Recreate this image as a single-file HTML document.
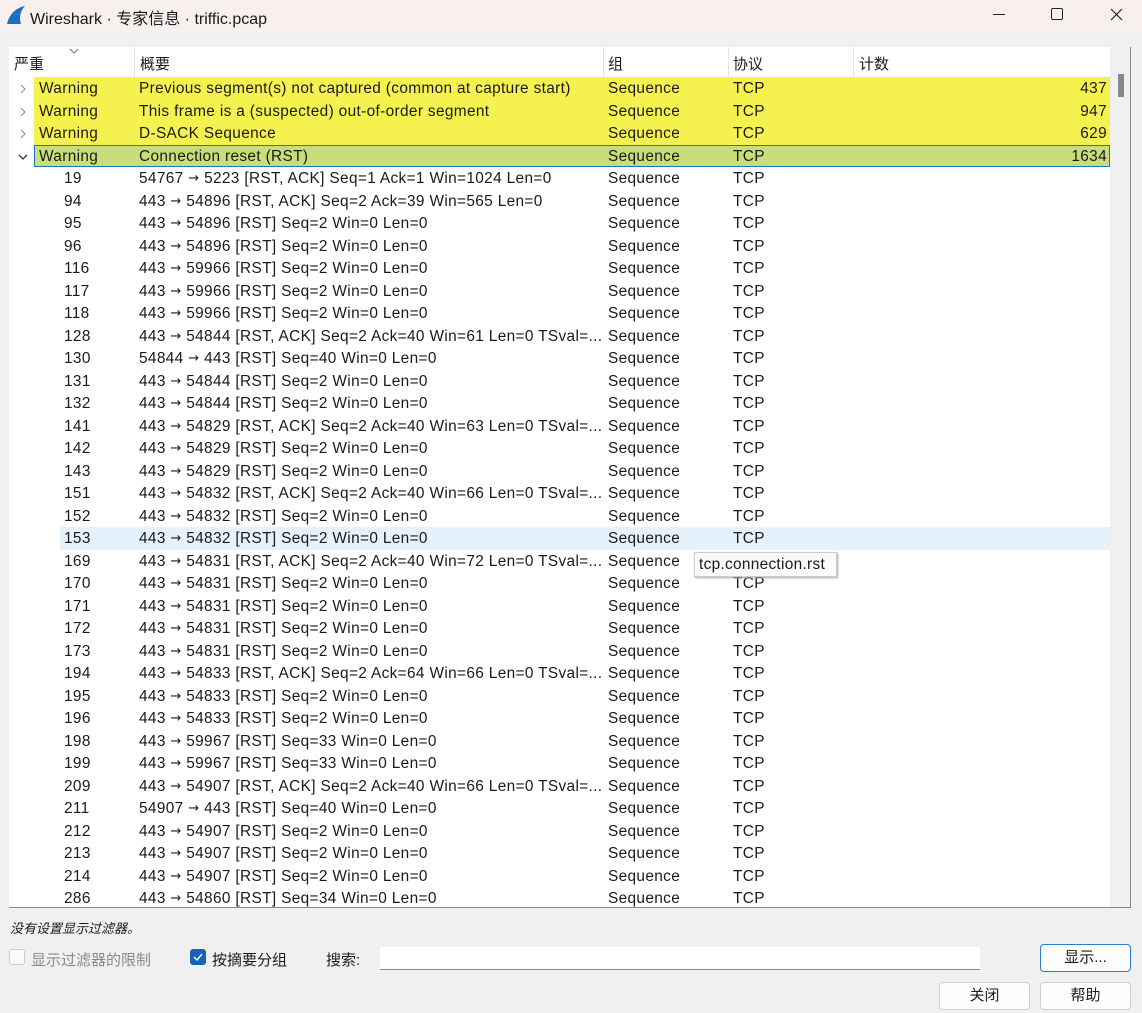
<!DOCTYPE html>
<html><head><meta charset="utf-8"><style>
*{margin:0;padding:0;box-sizing:border-box}
body{width:1142px;height:1013px;background:#f0f0f0;font-family:"Liberation Sans","Noto Sans CJK SC",sans-serif;font-size:15px;color:#1a1a1a;position:relative;overflow:hidden}
.title{position:absolute;left:0;top:0;width:1142px;height:32px;background:#f8f0ef}
.title span{position:absolute;left:30px;top:5px;font-size:16px}
.a{position:absolute}
.tbl{position:absolute;left:9px;top:47px;width:1122px;height:861px;background:#fff;border-right:1px solid #888;border-bottom:1px solid #888;overflow:hidden}
.hdr{position:absolute;top:0;left:0;height:31px;width:1101px}
.hdr div{position:absolute;top:6px}
.sep{position:absolute;top:0;height:31px;width:1px;background:#e5e5e5}
.row{position:absolute;left:0;width:1101px;height:22.5px;line-height:23px;white-space:nowrap;font-size:15.4px;letter-spacing:0.35px}
.row div{position:absolute;top:0}
.ar{font-family:"DejaVu Sans",sans-serif;font-size:13px;position:relative;top:-1px}
.y{background:#f5f250}
.g{background:#c8de78;border:1px solid #1a73c8;}
.sb{position:absolute;left:1101px;top:0;width:20px;height:861px;background:#f0f0f0}
.btn{position:absolute;background:#fdfdfd;border:1px solid #d0d0d0;border-radius:4px;text-align:center;line-height:26px;font-size:15px}
</style></head><body>
<div class="title"><svg class="a" style="left:6px;top:5px" width="20" height="20" viewBox="0 0 20 20"><path d="M1 19 C3 10 9 3 19 1 C14 6 13 13 15 19 Z" fill="#1a6fc0"/></svg><span>Wireshark · 专家信息 · triffic.pcap</span>
<div class="a" style="left:993px;top:14px;width:12px;height:1px;background:#222"></div>
<div class="a" style="left:1051px;top:8px;width:12px;height:12px;border:1px solid #222;border-radius:2px"></div>
<svg class="a" style="left:1110px;top:8px" width="13" height="13"><path d="M1 1L12 12M12 1L1 12" stroke="#222" stroke-width="1.2"/></svg>
</div>
<div class="tbl">
<div class="hdr"><div style="left:5px">严重</div><div style="left:131px">概要</div><div style="left:599px">组</div><div style="left:724px">协议</div><div style="left:850px">计数</div>
<svg class="a" style="left:60px;top:1px" width="10" height="6"><path d="M1 1L5 5L9 1" stroke="#777" fill="none"/></svg></div>
<div class="sep" style="left:125px"></div><div class="sep" style="left:594px"></div><div class="sep" style="left:719px"></div><div class="sep" style="left:844px"></div>
<div id="rows"></div>
<div class="sb"><div class="a" style="left:8px;top:27px;width:6px;height:23px;background:#888"></div></div>
</div>
<div class="a" style="left:694px;top:552px;width:143px;height:25px;background:#fafafa;border:1px solid #ccc;box-shadow:1px 1px 2px #aaa;line-height:23px;padding-left:4px;font-size:15.4px;letter-spacing:0.3px">tcp.connection.rst</div>
<div class="a" style="left:10px;top:918px;font-style:italic;font-size:13px">没有设置显示过滤器。</div>
<div class="a" style="left:9px;top:949px;width:16px;height:16px;border:1px solid #ccc;border-radius:3px;background:#fafafa"></div>
<div class="a" style="left:31px;top:949px;color:#8a8a8a">显示过滤器的限制</div>
<div class="a" style="left:190px;top:949px;width:16px;height:16px;border-radius:3px;background:#1a62b8"><svg width="16" height="16"><path d="M4 8L7 11L12 5" stroke="#fff" stroke-width="1.4" fill="none"/></svg></div>
<div class="a" style="left:212px;top:949px">按摘要分组</div>
<div class="a" style="left:326px;top:949px">搜索:</div>
<div class="a" style="left:380px;top:947px;width:600px;height:23px;background:#fff;border-bottom:1px solid #888"></div>
<div class="btn" style="left:1040px;top:944px;width:91px;height:28px;border:1px solid #2a7ad0">显示...</div>
<div class="btn" style="left:939px;top:982px;width:91px;height:28px">关闭</div>
<div class="btn" style="left:1040px;top:982px;width:91px;height:28px">帮助</div>
<script>
var g=[["Previous segment(s) not captured (common at capture start)","437"],["This frame is a (suspected) out-of-order segment","947"],["D-SACK Sequence","629"],["Connection reset (RST)","1634"]];
var c=[["19","54767 → 5223 [RST, ACK] Seq=1 Ack=1 Win=1024 Len=0"],["94","443 → 54896 [RST, ACK] Seq=2 Ack=39 Win=565 Len=0"],["95","443 → 54896 [RST] Seq=2 Win=0 Len=0"],["96","443 → 54896 [RST] Seq=2 Win=0 Len=0"],["116","443 → 59966 [RST] Seq=2 Win=0 Len=0"],["117","443 → 59966 [RST] Seq=2 Win=0 Len=0"],["118","443 → 59966 [RST] Seq=2 Win=0 Len=0"],["128","443 → 54844 [RST, ACK] Seq=2 Ack=40 Win=61 Len=0 TSval=..."],["130","54844 → 443 [RST] Seq=40 Win=0 Len=0"],["131","443 → 54844 [RST] Seq=2 Win=0 Len=0"],["132","443 → 54844 [RST] Seq=2 Win=0 Len=0"],["141","443 → 54829 [RST, ACK] Seq=2 Ack=40 Win=63 Len=0 TSval=..."],["142","443 → 54829 [RST] Seq=2 Win=0 Len=0"],["143","443 → 54829 [RST] Seq=2 Win=0 Len=0"],["151","443 → 54832 [RST, ACK] Seq=2 Ack=40 Win=66 Len=0 TSval=..."],["152","443 → 54832 [RST] Seq=2 Win=0 Len=0"],["153","443 → 54832 [RST] Seq=2 Win=0 Len=0"],["169","443 → 54831 [RST, ACK] Seq=2 Ack=40 Win=72 Len=0 TSval=..."],["170","443 → 54831 [RST] Seq=2 Win=0 Len=0"],["171","443 → 54831 [RST] Seq=2 Win=0 Len=0"],["172","443 → 54831 [RST] Seq=2 Win=0 Len=0"],["173","443 → 54831 [RST] Seq=2 Win=0 Len=0"],["194","443 → 54833 [RST, ACK] Seq=2 Ack=64 Win=66 Len=0 TSval=..."],["195","443 → 54833 [RST] Seq=2 Win=0 Len=0"],["196","443 → 54833 [RST] Seq=2 Win=0 Len=0"],["198","443 → 59967 [RST] Seq=33 Win=0 Len=0"],["199","443 → 59967 [RST] Seq=33 Win=0 Len=0"],["209","443 → 54907 [RST, ACK] Seq=2 Ack=40 Win=66 Len=0 TSval=..."],["211","54907 → 443 [RST] Seq=40 Win=0 Len=0"],["212","443 → 54907 [RST] Seq=2 Win=0 Len=0"],["213","443 → 54907 [RST] Seq=2 Win=0 Len=0"],["214","443 → 54907 [RST] Seq=2 Win=0 Len=0"],["286","443 → 54860 [RST] Seq=34 Win=0 Len=0"]];
var h="",y=30;
g.forEach(function(r,i){var last=i==3;
h+='<div class="row '+(last?'g':'y')+'" style="top:'+y+'px;left:25px;width:1076px;'+(last?'line-height:21px':'')+'"><div style="left:'+(last?4:5)+'px">Warning</div><div style="left:'+(last?104:105)+'px">'+r[0]+'</div><div style="left:'+(last?573:574)+'px">Sequence</div><div style="left:'+(last?698:699)+'px">TCP</div><div style="right:'+(last?2:3)+'px">'+r[1]+'</div></div>';
h+='<svg class="a" style="left:9px;top:'+(y+7)+'px" width="10" height="10">'+(last?'<path d="M1 3L5 7L9 3" stroke="#333" fill="none" stroke-width="1.3"/>':'<path d="M3 1L7 5L3 9" stroke="#888" fill="none"/>')+'</svg>';
y+=22.5;});
c.forEach(function(r){var sel=r[0]=="153";
h+='<div class="row" style="top:'+y+'px;'+(sel?'background:#e5f1fb;':'')+'left:51px;width:1050px"><div style="left:4px">'+r[0]+'</div><div style="left:79px">'+r[1].replace('→','<span class="ar">→</span>')+'</div><div style="left:548px">Sequence</div><div style="left:673px">TCP</div></div>';
y+=22.5;});
document.getElementById("rows").innerHTML=h;
</script>
</body></html>
